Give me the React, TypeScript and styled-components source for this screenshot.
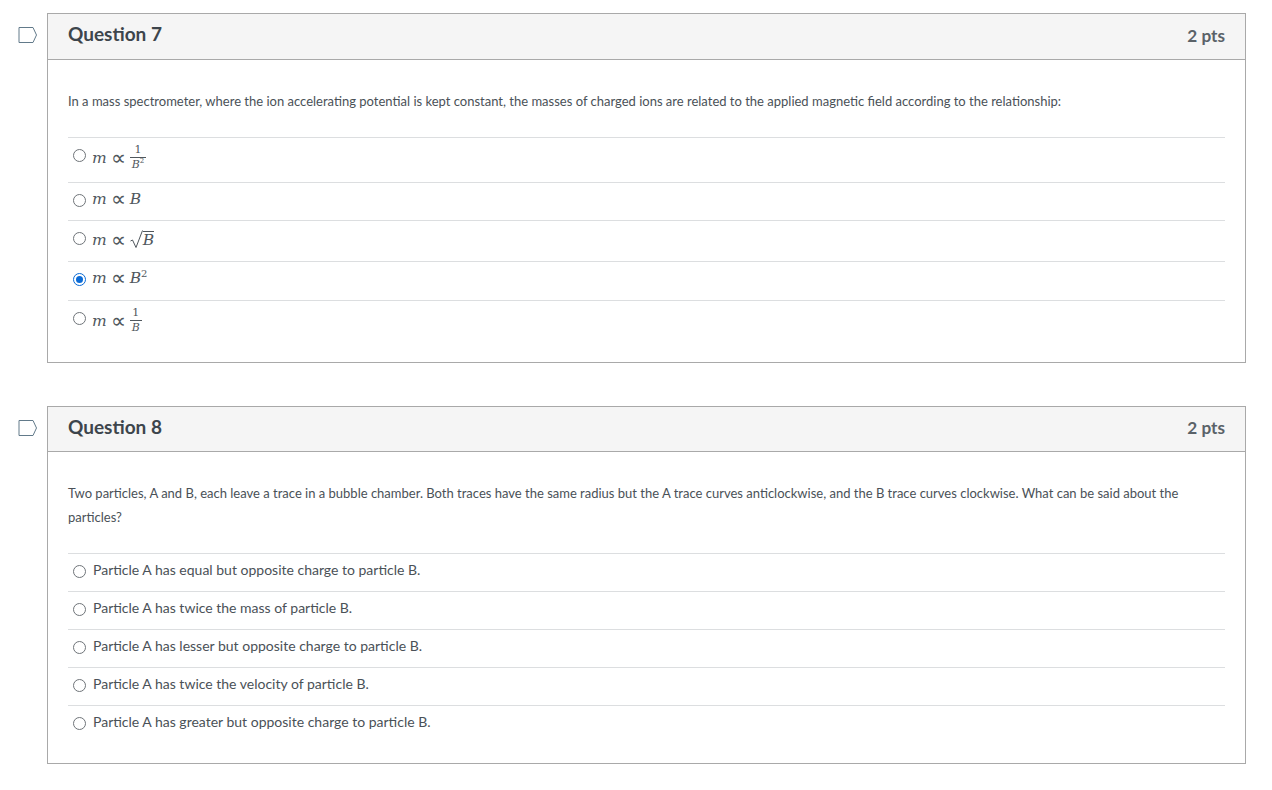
import React from 'react';
import styled, { createGlobalStyle } from 'styled-components';

const GlobalStyle = createGlobalStyle`
  html, body {
    margin: 0;
    padding: 0;
    background: #fff;
  }
  body {
    font-family: Lato, "Open Sans", sans-serif;
    color: #2d3b45;
    font-variant-ligatures: common-ligatures;
  }
`;

const Page = styled.div`
  width: 1272px;
  height: 790px;
  box-sizing: border-box;
  padding: 13px 26px 0 18px;
  overflow: hidden;
  display: flex;
  flex-direction: column;
  gap: 43px;
`;

const QuestionRow = styled.section`
  display: flex;
  align-items: flex-start;
  gap: 9px;
`;

const Flag = styled.svg`
  flex: none;
  width: 20px;
  height: 18px;
  margin-top: 13px;
`;

const Card = styled.div<{ $height: number }>`
  flex: 1;
  height: ${(p) => p.$height}px;
  box-sizing: border-box;
  border: 1px solid #a9a9a9;
`;

const CardHeader = styled.header<{ $height: number }>`
  height: ${(p) => p.$height}px;
  box-sizing: border-box;
  background: #f5f5f5;
  border-bottom: 1px solid #a9a9a9;
  padding: 0 20px;
  display: flex;
  align-items: flex-start;
  justify-content: space-between;
`;

const Title = styled.h2`
  margin: 8px 0 0;
  font-size: 19px;
  line-height: 24px;
  font-weight: 700;
  color: #3d454c;
`;

const Points = styled.span<{ $top: number }>`
  margin-top: ${(p) => p.$top}px;
  font-size: 17.2px;
  line-height: 22px;
  font-weight: 700;
  color: #5a6268;
`;

const CardBody = styled.div`
  padding: 29px 20px 0;
`;

const Prompt = styled.p`
  margin: 0 0 24px;
  font-size: 13px;
  line-height: 24px;
  color: #4a5157;
`;

const Answer = styled.label<{ $height: number }>`
  height: ${(p) => p.$height}px;
  box-sizing: border-box;
  border-top: 1px solid #dcdee0;
  padding-left: 5px;
  display: flex;
  align-items: flex-start;
  gap: 7px;
  font-size: 14px;
  line-height: 20px;
  color: #4a5157;
`;

const Radio = styled.span<{ $checked?: boolean }>`
  flex: none;
  width: 13px;
  height: 13px;
  box-sizing: border-box;
  border-radius: 50%;
  border: 1px solid ${(p) => (p.$checked ? '#0b6bd6' : '#6f7479')};
  background: #fff;
  position: relative;
  margin-top: 11px;

  ${(p) =>
    p.$checked &&
    `
    &::after {
      content: '';
      position: absolute;
      inset: 2px;
      border-radius: 50%;
      background: #0b6bd6;
    }
  `}
`;

const AnswerText = styled.span`
  margin-top: 6px;
`;

const Formula = styled.span<{ $top?: number }>`
  display: inline-flex;
  align-items: center;
  margin: ${(p) => p.$top ?? 7}px 0 0 -1px;
  font-family: "DejaVu Serif", "Liberation Serif", serif;
  font-size: 15.5px;
  line-height: 18px;
  color: #50575d;
`;

const Var = styled.i`
  font-style: italic;
`;

const Prop = styled.span`
  margin: 0 4px 0 4px;
  font-family: "DejaVu Sans", sans-serif;
  font-size: 21px;
  font-weight: 300;
  line-height: 0;
`;

const Sup = styled.sup`
  align-self: flex-start;
  margin-top: 0;
  font-size: 10px;
  line-height: 10px;
`;

const Frac = styled.span`
  display: inline-flex;
  flex-direction: column;
  align-items: center;
  font-size: 11px;
  line-height: 12px;
`;

const Num = styled.span`
  align-self: stretch;
  text-align: center;
  padding: 0 2px 1px;
  border-bottom: 1px solid #50575d;
`;

const Den = styled.span`
  padding: 1px 2px 0;
`;

const DenSup = styled.sup`
  font-size: 7px;
  line-height: 0;
`;

const Radical = styled.svg`
  width: 13px;
  height: 19px;
  flex: none;
`;

const Radicand = styled.span`
  border-top: 1px solid #50575d;
  line-height: 16px;
  margin-bottom: 1px;
`;

function FlagIcon() {
  return (
    <Flag viewBox="0 0 20 18">
      <path d="M1 1.5 H15 L18.5 9 L15 16.5 H1 Z" fill="none" stroke="#627a8a" strokeWidth="1" />
    </Flag>
  );
}

const m = <Var>m</Var>;
const prop = <Prop>∝</Prop>;
const B = <Var>B</Var>;

function Q7() {
  return (
    <Card $height={350}>
      <CardHeader $height={46}>
        <Title>Question 7</Title>
        <Points $top={11}>2 pts</Points>
      </CardHeader>
      <CardBody>
        <Prompt>
          In a mass spectrometer, where the ion accelerating potential is kept constant, the masses of charged ions are related to the applied magnetic field according to the relationship:
        </Prompt>
        <Answer $height={45}>
          <Radio />
          <Formula $top={6}>
            {m}{prop}
            <Frac>
              <Num>1</Num>
              <Den><Var>B</Var><DenSup>2</DenSup></Den>
            </Frac>
          </Formula>
        </Answer>
        <Answer $height={38}>
          <Radio />
          <Formula>{m}{prop}{B}</Formula>
        </Answer>
        <Answer $height={41}>
          <Radio />
          <Formula $top={9}>
            {m}{prop}
            <Radical viewBox="0 0 13 19">
              <path d="M0.5 11 L2.5 10 L6 17.5 L12.5 0.5" fill="none" stroke="#50575d" strokeWidth="1" />
            </Radical>
            <Radicand>{B}</Radicand>
          </Formula>
        </Answer>
        <Answer $height={39}>
          <Radio $checked />
          <Formula>{m}{prop}{B}<Sup>2</Sup></Formula>
        </Answer>
        <Answer $height={40}>
          <Radio />
          <Formula $top={6}>
            {m}{prop}
            <Frac>
              <Num>1</Num>
              <Den><Var>B</Var></Den>
            </Frac>
          </Formula>
        </Answer>
      </CardBody>
    </Card>
  );
}

const q8Answers = [
  'Particle A has equal but opposite charge to particle B.',
  'Particle A has twice the mass of particle B.',
  'Particle A has lesser but opposite charge to particle B.',
  'Particle A has twice the velocity of particle B.',
  'Particle A has greater but opposite charge to particle B.',
];

function Q8() {
  return (
    <Card $height={358}>
      <CardHeader $height={45}>
        <Title>Question 8</Title>
        <Points $top={10}>2 pts</Points>
      </CardHeader>
      <CardBody>
        <Prompt>
          Two particles, A and B, each leave a trace in a bubble chamber. Both traces have the same radius but the A trace curves anticlockwise, and the B trace curves clockwise. What can be said about the particles?
        </Prompt>
        {q8Answers.map((a) => (
          <Answer key={a} $height={38}>
            <Radio />
            <AnswerText>{a}</AnswerText>
          </Answer>
        ))}
      </CardBody>
    </Card>
  );
}

export default function App() {
  return (
    <>
      <GlobalStyle />
      <Page>
        <QuestionRow>
          <FlagIcon />
          <Q7 />
        </QuestionRow>
        <QuestionRow>
          <FlagIcon />
          <Q8 />
        </QuestionRow>
      </Page>
    </>
  );
}
